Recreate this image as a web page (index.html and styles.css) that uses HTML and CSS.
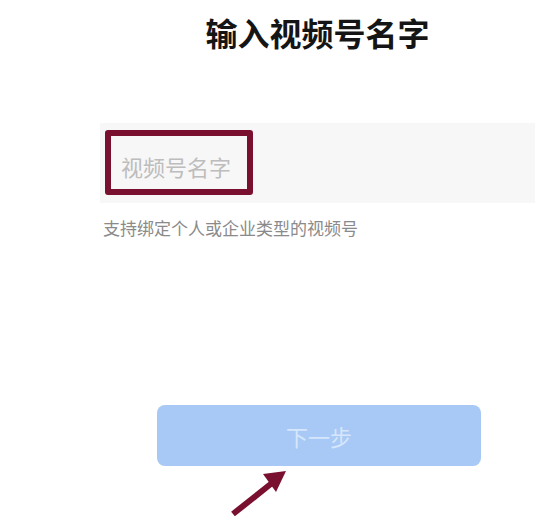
FILE: index.html
```html
<!DOCTYPE html>
<html lang="zh-CN">
<head>
<meta charset="utf-8">
<title>输入视频号名字</title>
<link rel="stylesheet" href="styles.css">
</head>
<body>
<main class="page">
  <h1 class="title">输入视频号名字</h1>
  <div class="field">
    <span class="placeholder">视频号名字</span>
    <span class="highlight"></span>
  </div>
  <p class="hint">支持绑定个人或企业类型的视频号</p>
  <button class="next" type="button">下一步</button>
</main>
<svg class="arrow" width="555" height="526" viewBox="0 0 555 526">
  <line x1="233" y1="514" x2="272" y2="483" stroke="#7a1030" stroke-width="6" stroke-linecap="butt"/>
  <polygon points="286,471 263,474 276,492" fill="#7a1030"/>
</svg>
</body>
</html>
```
FILE: styles.css
```css
html, body {
  margin: 0;
  padding: 0;
  background: #ffffff;
}
body {
  width: 555px;
  height: 526px;
  overflow: hidden;
  position: relative;
  font-family: "Noto Sans CJK SC", "Noto Sans", sans-serif;
}
.page {
  width: 435px;
  margin-left: 100px;
  padding-top: 12px;
  display: flex;
  flex-direction: column;
}
.title {
  margin: 0;
  font-size: 32px;
  line-height: 40px;
  font-weight: 700;
  color: #151515;
  text-align: center;
}
.field {
  position: relative;
  margin-top: 71px;
  height: 80px;
  background: #f7f7f7;
  display: flex;
  align-items: center;
  padding: 6px 0 0 21px;
  box-sizing: border-box;
}
.placeholder {
  font-size: 22px;
  line-height: 30px;
  color: #bdbdbd;
}
.highlight {
  position: absolute;
  left: 5px;
  top: 7px;
  width: 148px;
  height: 65px;
  box-sizing: border-box;
  border: 6px solid #7a1030;
  border-radius: 3px;
}
.hint {
  margin: 13px 0 0 3px;
  font-size: 17px;
  line-height: 24px;
  color: #8a8a8a;
}
.next {
  margin: 165px 0 0 57px;
  width: 324px;
  height: 61px;
  border: none;
  border-radius: 8px;
  background: #a8c9f5;
  color: #d6e6fc;
  font-family: "Noto Sans CJK SC", "Noto Sans", sans-serif;
  font-size: 22px;
  padding: 0;
}
.arrow {
  position: absolute;
  left: 0;
  top: 0;
  pointer-events: none;
}
```
